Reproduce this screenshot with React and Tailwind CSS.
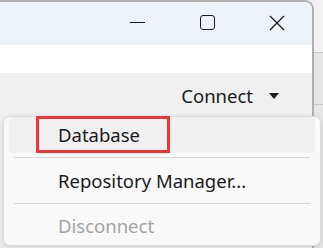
import React from "react";

export default function App() {
  const font = { fontFamily: '"Noto Sans", "Open Sans", Arial, sans-serif' };
  return (
    <div className="relative w-[323px] h-[248px] overflow-hidden bg-[#f3f3f3]" style={font}>
      <div className="flex h-full">
        {/* window */}
        <div className="w-[314px] h-full flex flex-col border-t-2 border-r-2 border-[#b0b0b0] rounded-tr-[9px] overflow-hidden bg-[#f0f0f0]">
          <div className="h-[43px] bg-[#eef3fa] flex items-center justify-end pb-[2px]">
            <div className="w-[70px] flex justify-center">
              <div className="w-[15px] h-px bg-[#1a1a1a]" />
            </div>
            <div className="w-[70px] flex justify-center">
              <div className="w-[15px] h-[15px] border-[1.5px] border-[#1a1a1a] rounded-[3px]" />
            </div>
            <div className="w-[70px] flex justify-center">
              <svg width="16" height="16" viewBox="0 0 16 16">
                <path d="M1 1 L15 15 M15 1 L1 15" stroke="#1a1a1a" strokeWidth="1.3" fill="none" />
              </svg>
            </div>
          </div>
          <div className="h-[28px] bg-white" />
          <div className="h-[43px] flex items-center justify-end pr-[33px] pt-[3px]">
            <span className="text-[18.5px] text-[#1a1a1a] leading-none">Connect</span>
            <svg className="ml-[16px]" width="10" height="6" viewBox="0 0 10 6">
              <path d="M0 0 L10 0 L5 6 Z" fill="#1a1a1a" />
            </svg>
          </div>
        </div>
        {/* desktop strip */}
        <div className="flex-1 flex flex-col">
          <div className="h-[52px]" />
          <div className="h-px bg-[#c8c8c8]" />
          <div className="h-[51px] bg-[#e6e6e6]" />
          <div className="h-px bg-[#c8c8c8]" />
          <div className="flex-1 bg-[#e6e6e6]" />
        </div>
      </div>

      {/* dropdown menu */}
      <div className="absolute left-[3px] top-[116px] w-[318px] h-[130px] bg-[#f9f9f9] border border-[#dcdcdc] rounded-[7px] shadow-[0_2px_6px_rgba(0,0,0,0.12)] flex flex-col">
        <div className="mx-[5px] h-[36px] rounded-[4px] bg-[#f0f0f0] flex items-center pl-[49px] text-[18.5px] text-[#1a1a1a]">
          Database
        </div>
        <div className="mx-[10px] mt-[4px] h-px bg-[#d6d6d6]" />
        <div className="h-[45px] flex items-center pl-[54px] text-[18.5px] text-[#1a1a1a]">
          Repository Manager...
        </div>
        <div className="mx-[10px] h-px bg-[#d6d6d6]" />
        <div className="flex-1 flex items-center pl-[54px] pt-[2px] text-[18.5px] text-[#a3a3a3]">
          Disconnect
        </div>
      </div>

      {/* red highlight box */}
      <div className="absolute left-[36px] top-[116px] w-[134px] h-[37px] border-[3px] border-[#ef3535]" />
    </div>
  );
}
